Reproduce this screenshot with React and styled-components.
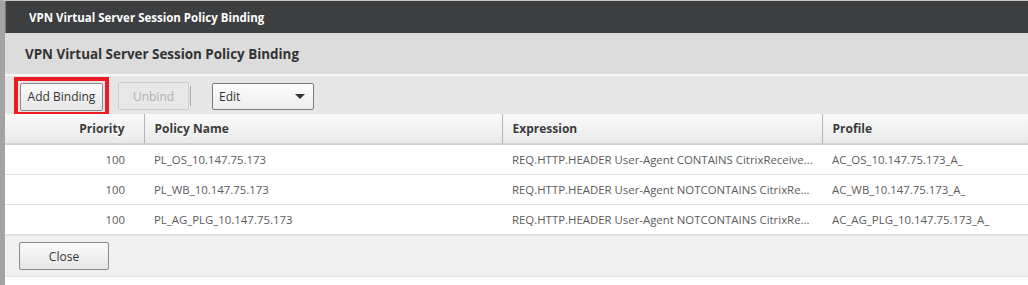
import styled, { createGlobalStyle } from 'styled-components';

const GlobalStyle = createGlobalStyle`
  body {
    margin: 0;
    background: #ffffff;
    font-family: "Open Sans", "Noto Sans", Arial, sans-serif;
  }
`;

const Window = styled.div`
  width: 1028px;
  height: 285px;
  box-sizing: border-box;
  border-left: 5px solid #a3a3a3;
  border-top: 1px solid #c8c8c8;
  display: flex;
  flex-direction: column;
  overflow: hidden;
  background: #fff;
`;

const TitleBar = styled.div`
  height: 32px;
  flex: none;
  background: #3d3e40;
  color: #fff;
  font-size: 11.5px;
  font-weight: 700;
  display: flex;
  align-items: center;
  padding-left: 23px;
  border-left: 1px solid #7a7a7a;
`;

const SubHeader = styled.div`
  height: 41px;
  flex: none;
  background: #dcdcdc;
  color: #333;
  font-size: 13.4px;
  font-weight: 700;
  display: flex;
  align-items: center;
  padding-left: 20px;
  border-bottom: 2px solid #f6f6f6;
`;

const Toolbar = styled.div`
  height: 38px;
  flex: none;
  background: #e6e6e6;
  display: flex;
  align-items: center;
  padding: 2px 0 0 9px;
  box-sizing: border-box;
`;

// red annotation frame round the button
const Highlight = styled.span`
  display: flex;
  border: 4px solid #ec1c24;
  padding: 2px 2px 1px 2px;
`;

const Button = styled.button`
  height: 28px;
  width: ${p => p.$w || 83}px;
  box-sizing: border-box;
  font-family: inherit;
  font-size: 12px;
  color: ${p => (p.disabled ? '#b0b0b0' : '#333')};
  background: ${p =>
    p.disabled ? '#e8e8e8' : 'linear-gradient(#fbfbfb, #e6e6e6)'};
  border: 1px solid ${p => (p.disabled ? '#cfcfcf' : '#8a8a8a')};
  border-radius: 2px;
  padding: 0;
  margin-left: ${p => p.$gap || 0}px;
`;

const Separator = styled.span`
  width: 1px;
  height: 20px;
  background: #aaa;
  margin: 0 21px 0 1px;
`;

const Select = styled.div`
  width: 102px;
  height: 27px;
  box-sizing: border-box;
  border: 1px solid #7a7a7a;
  border-radius: 2px;
  background: linear-gradient(#fdfdfd, #ededed);
  display: flex;
  align-items: center;
  justify-content: space-between;
  padding: 0 8px 0 6px;
  font-size: 12px;
  color: #333;
`;

const Caret = styled.span`
  width: 0;
  height: 0;
  border-left: 5px solid transparent;
  border-right: 5px solid transparent;
  border-top: 5px solid #333;
`;

const Table = styled.table`
  width: 100%;
  table-layout: fixed;
  border-collapse: collapse;
  font-size: 11.4px;
`;

const Th = styled.th`
  height: 29px;
  padding: 0 ${p => (p.$right ? '19px' : '10px')};
  text-align: ${p => (p.$right ? 'right' : 'left')};
  font-size: 12px;
  font-weight: 700;
  color: #3a3a3a;
  text-shadow: 0 1px 0 #fff;
  background: linear-gradient(#fafafa, #e9e9e9);
  border-bottom: 2px solid #d2d2d2;
  border-left: ${p => (p.$first ? 'none' : '1px solid #b5b5b5')};
`;

const Td = styled.td`
  height: 29px;
  padding: ${p => (p.$right ? '0 19px 0 0' : '0 2px 0 10px')};
  text-align: ${p => (p.$right ? 'right' : 'left')};
  color: #5c5c5c;
  border-bottom: 1px solid #e0e0e0;
  white-space: nowrap;
  overflow: hidden;
`;

const Footer = styled.div`
  height: 40px;
  flex: none;
  background: #f0f0f0;
  border-top: 1px solid #e0e0e0;
  border-bottom: 1px solid #e0e0e0;
  display: flex;
  align-items: center;
  padding-left: 14px;
`;

const rows = [
  {
    priority: 100,
    name: 'PL_OS_10.147.75.173',
    expr: 'REQ.HTTP.HEADER User-Agent CONTAINS CitrixReceive...',
    profile: 'AC_OS_10.147.75.173_A_',
  },
  {
    priority: 100,
    name: 'PL_WB_10.147.75.173',
    expr: 'REQ.HTTP.HEADER User-Agent NOTCONTAINS CitrixRe...',
    profile: 'AC_WB_10.147.75.173_A_',
  },
  {
    priority: 100,
    name: 'PL_AG_PLG_10.147.75.173',
    expr: 'REQ.HTTP.HEADER User-Agent NOTCONTAINS CitrixRe...',
    profile: 'AC_AG_PLG_10.147.75.173_A_',
  },
];

export default function App() {
  return (
    <>
      <GlobalStyle />
      <Window>
        <TitleBar>VPN Virtual Server Session Policy Binding</TitleBar>
        <SubHeader>VPN Virtual Server Session Policy Binding</SubHeader>
        <Toolbar>
          <Highlight>
            <Button type="button">Add Binding</Button>
          </Highlight>
          <Button type="button" disabled $w={71} $gap={9}>
            Unbind
          </Button>
          <Separator />
          <Select>
            Edit
            <Caret />
          </Select>
        </Toolbar>
        <Table>
          <colgroup>
            <col style={{ width: 139 }} />
            <col style={{ width: 358 }} />
            <col style={{ width: 320 }} />
            <col />
          </colgroup>
          <thead>
            <tr>
              <Th $right $first>Priority</Th>
              <Th>Policy Name</Th>
              <Th>Expression</Th>
              <Th>Profile</Th>
            </tr>
          </thead>
          <tbody>
            {rows.map(r => (
              <tr key={r.name}>
                <Td $right>{r.priority}</Td>
                <Td>{r.name}</Td>
                <Td>{r.expr}</Td>
                <Td>{r.profile}</Td>
              </tr>
            ))}
          </tbody>
        </Table>
        <Footer>
          <Button type="button" $w={90}>
            Close
          </Button>
        </Footer>
      </Window>
    </>
  );
}
